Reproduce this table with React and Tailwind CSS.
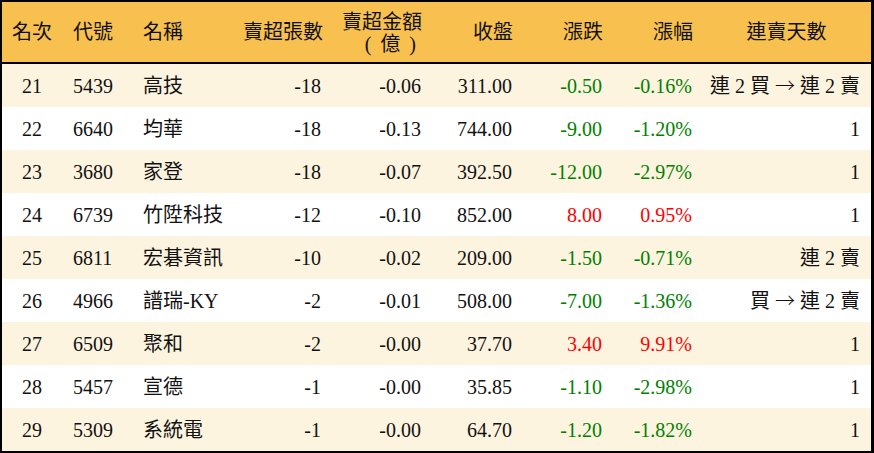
import React from "react";

const rows = [
  ["21", "5439", "高技", "-18", "-0.06", "311.00", "-0.50", "-0.16%", "連 2 買 → 連 2 賣", "g"],
  ["22", "6640", "均華", "-18", "-0.13", "744.00", "-9.00", "-1.20%", "1", "g"],
  ["23", "3680", "家登", "-18", "-0.07", "392.50", "-12.00", "-2.97%", "1", "g"],
  ["24", "6739", "竹陞科技", "-12", "-0.10", "852.00", "8.00", "0.95%", "1", "r"],
  ["25", "6811", "宏碁資訊", "-10", "-0.02", "209.00", "-1.50", "-0.71%", "連 2 賣", "g"],
  ["26", "4966", "譜瑞-KY", "-2", "-0.01", "508.00", "-7.00", "-1.36%", "買 → 連 2 賣", "g"],
  ["27", "6509", "聚和", "-2", "-0.00", "37.70", "3.40", "9.91%", "1", "r"],
  ["28", "5457", "宣德", "-1", "-0.00", "35.85", "-1.10", "-2.98%", "1", "g"],
  ["29", "5309", "系統電", "-1", "-0.00", "64.70", "-1.20", "-1.82%", "1", "g"],
];

const cols = "grid grid-cols-[60px_71px_100px_98px_100px_91px_90px_90px_169px]";

function Streak({ text }) {
  const parts = text.split(/(→)/);
  return (
    <span className="whitespace-pre">
      {parts.map((p, i) =>
        p === "→" ? (
          <span key={i} style={{ fontFamily: '"Noto Sans CJK TC", sans-serif' }} className="font-light">
            →
          </span>
        ) : (
          <span key={i}>{p}</span>
        )
      )}
    </span>
  );
}

export default function App() {
  return (
    <div
      className="w-[874px] h-[453px] bg-black pt-[2px] pl-[2px] pr-[3px] pb-[2px] text-[20px] text-[#111]"
      style={{ fontFamily: '"Liberation Serif", "Noto Sans CJK TC", serif' }}
    >
      <div className="w-[869px] h-[449px] flex flex-col">
        <div className={`${cols} h-[62px] bg-[#F8C04E] items-center border-b-2 border-black`}>
          <div className="text-center">名次</div>
          <div className="pl-[11px]">代號</div>
          <div className="pl-[10px]">名稱</div>
          <div className="text-right pr-[8px]">賣超張數</div>
          <div className="text-right pr-[9px] leading-[20px] mt-[1px]">
            <div>賣超金額</div>
            <div className="flex justify-end items-center gap-[9px] pr-[6px] mt-[2px]">
              <span className="font-light">(</span>
              <span>億</span>
              <span className="font-light">)</span>
            </div>
          </div>
          <div className="text-right pr-[9px]">收盤</div>
          <div className="text-right pr-[9px]">漲跌</div>
          <div className="text-right pr-[9px]">漲幅</div>
          <div className="text-center">連賣天數</div>
        </div>
        <div className="flex-1 flex flex-col">
          {rows.map((r, i) => {
            const c = r[9] === "g" ? "text-[#008000]" : "text-[#ff0000]";
            return (
              <div
                key={i}
                className={`${cols} h-[43px] items-center ${i % 2 === 0 ? "bg-[#FDF4E0]" : "bg-white"}`}
              >
                <div className="text-center">{r[0]}</div>
                <div className="pl-[11px]">{r[1]}</div>
                <div className="pl-[10px]">{r[2]}</div>
                <div className="text-right pr-[10px]">{r[3]}</div>
                <div className="text-right pr-[10px]">{r[4]}</div>
                <div className="text-right pr-[10px]">{r[5]}</div>
                <div className={`text-right pr-[10px] ${c}`}>{r[6]}</div>
                <div className={`text-right pr-[10px] ${c}`}>{r[7]}</div>
                <div className="text-right pr-[11px]">
                  <Streak text={r[8]} />
                </div>
              </div>
            );
          })}
        </div>
      </div>
    </div>
  );
}
